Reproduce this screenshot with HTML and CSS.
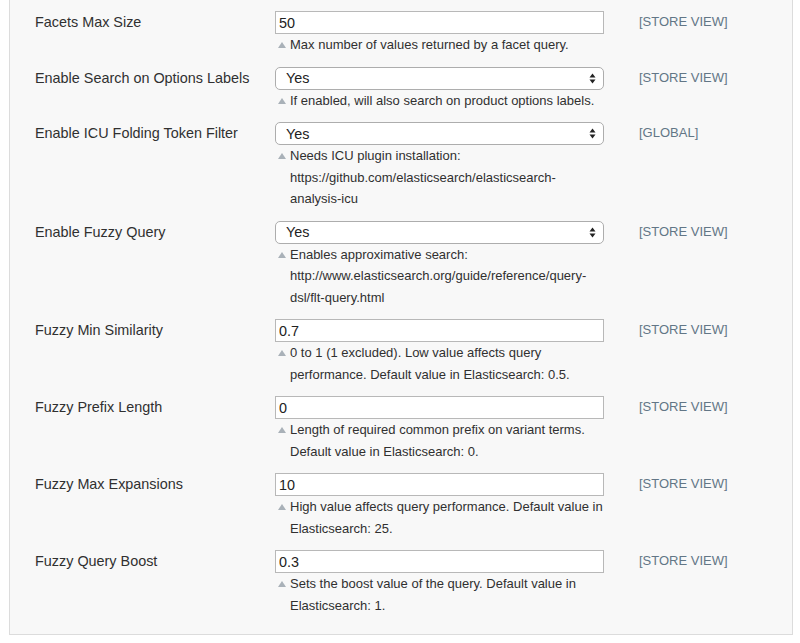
FILE: index.html
```html
<!DOCTYPE html>
<html>
<head>
<meta charset="utf-8">
<link rel="stylesheet" href="styles.css">
</head>
<body>
<div class="panel">
  <div class="row">
    <label class="label">Facets Max Size</label>
    <div class="value">
      <input class="text" type="text" value="50">
      <p class="note">Max number of values returned by a facet query.</p>
    </div>
    <div class="scope">[STORE VIEW]</div>
  </div>
  <div class="row">
    <label class="label">Enable Search on Options Labels</label>
    <div class="value">
      <div class="select-wrap"><select class="select"><option>Yes</option></select><span class="arrows"><svg width="7" height="11" viewBox="0 0 7 11"><path d="M3.5 0.5L6.5 4.5H0.5Z M3.5 10.5L0.5 6.5H6.5Z" fill="#222"/></svg></span></div>
      <p class="note">If enabled, will also search on product options labels.</p>
    </div>
    <div class="scope">[STORE VIEW]</div>
  </div>
  <div class="row">
    <label class="label">Enable ICU Folding Token Filter</label>
    <div class="value">
      <div class="select-wrap"><select class="select"><option>Yes</option></select><span class="arrows"><svg width="7" height="11" viewBox="0 0 7 11"><path d="M3.5 0.5L6.5 4.5H0.5Z M3.5 10.5L0.5 6.5H6.5Z" fill="#222"/></svg></span></div>
      <p class="note">Needs ICU plugin installation: https://github.com/elasticsearch/elasticsearch-analysis-icu</p>
    </div>
    <div class="scope">[GLOBAL]</div>
  </div>
  <div class="row">
    <label class="label">Enable Fuzzy Query</label>
    <div class="value">
      <div class="select-wrap"><select class="select"><option>Yes</option></select><span class="arrows"><svg width="7" height="11" viewBox="0 0 7 11"><path d="M3.5 0.5L6.5 4.5H0.5Z M3.5 10.5L0.5 6.5H6.5Z" fill="#222"/></svg></span></div>
      <p class="note">Enables approximative search: http://www.elasticsearch.org/guide/reference/query-dsl/flt-query.html</p>
    </div>
    <div class="scope">[STORE VIEW]</div>
  </div>
  <div class="row">
    <label class="label">Fuzzy Min Similarity</label>
    <div class="value">
      <input class="text" type="text" value="0.7">
      <p class="note">0 to 1 (1 excluded). Low value affects query performance. Default value in Elasticsearch: 0.5.</p>
    </div>
    <div class="scope">[STORE VIEW]</div>
  </div>
  <div class="row">
    <label class="label">Fuzzy Prefix Length</label>
    <div class="value">
      <input class="text" type="text" value="0">
      <p class="note">Length of required common prefix on variant terms. Default value in Elasticsearch: 0.</p>
    </div>
    <div class="scope">[STORE VIEW]</div>
  </div>
  <div class="row">
    <label class="label">Fuzzy Max Expansions</label>
    <div class="value">
      <input class="text" type="text" value="10">
      <p class="note">High value affects query performance. Default value in Elasticsearch: 25.</p>
    </div>
    <div class="scope">[STORE VIEW]</div>
  </div>
  <div class="row">
    <label class="label">Fuzzy Query Boost</label>
    <div class="value">
      <input class="text" type="text" value="0.3">
      <p class="note">Sets the boost value of the query. Default value in Elasticsearch: 1.</p>
    </div>
    <div class="scope">[STORE VIEW]</div>
  </div>
</div>
</body>
</html>
```
FILE: styles.css
```css
html, body {
  margin: 0;
  padding: 0;
  background: #ffffff;
}
body {
  font-family: "Liberation Sans", Arial, Helvetica, sans-serif;
  color: #303030;
}
.panel {
  margin-left: 9px;
  width: 784px;
  box-sizing: border-box;
  background: #f8f8f8;
  border: 1px solid #dcdcdc;
  border-top: 0;
  padding: 11px 0 7px 0;
}
.row {
  display: grid;
  grid-template-columns: 240px 329px auto;
  padding-left: 25px;
  padding-bottom: 11px;
}
.label {
  font-size: 14.4px;
  line-height: 22px;
}
.value {
  display: flex;
  flex-direction: column;
}
.text {
  box-sizing: border-box;
  width: 329px;
  height: 23px;
  margin: 0;
  border: 1px solid #b8b8b8;
  border-radius: 0;
  background: #fff;
  padding: 0 3px;
  font-family: "Liberation Sans", Arial, sans-serif;
  font-size: 14.4px;
  color: #222;
  outline: none;
}
.select-wrap {
  position: relative;
  width: 329px;
  height: 23px;
}
.select {
  appearance: none;
  -webkit-appearance: none;
  box-sizing: border-box;
  width: 329px;
  height: 23px;
  margin: 0;
  border: 1px solid #adadad;
  border-radius: 5px;
  background: #fff;
  padding: 0 10px;
  font-family: "Liberation Sans", Arial, sans-serif;
  font-size: 14.4px;
  color: #222;
}
.arrows {
  position: absolute;
  right: 8px;
  top: 6px;
  width: 7px;
  height: 11px;
  display: block;
  pointer-events: none;
}
.arrows svg {
  display: block;
}
.note {
  position: relative;
  margin: 0;
  padding-left: 15px;
  font-size: 13px;
  line-height: 21.5px;
  color: #303030;
}
.note::before {
  content: "";
  position: absolute;
  left: 3px;
  top: 8px;
  width: 0;
  height: 0;
  border-left: 4px solid transparent;
  border-right: 4px solid transparent;
  border-bottom: 6px solid #a9b1b8;
}
.scope {
  padding-left: 35px;
  font-size: 13px;
  line-height: 22px;
  color: #627686;
}
```
